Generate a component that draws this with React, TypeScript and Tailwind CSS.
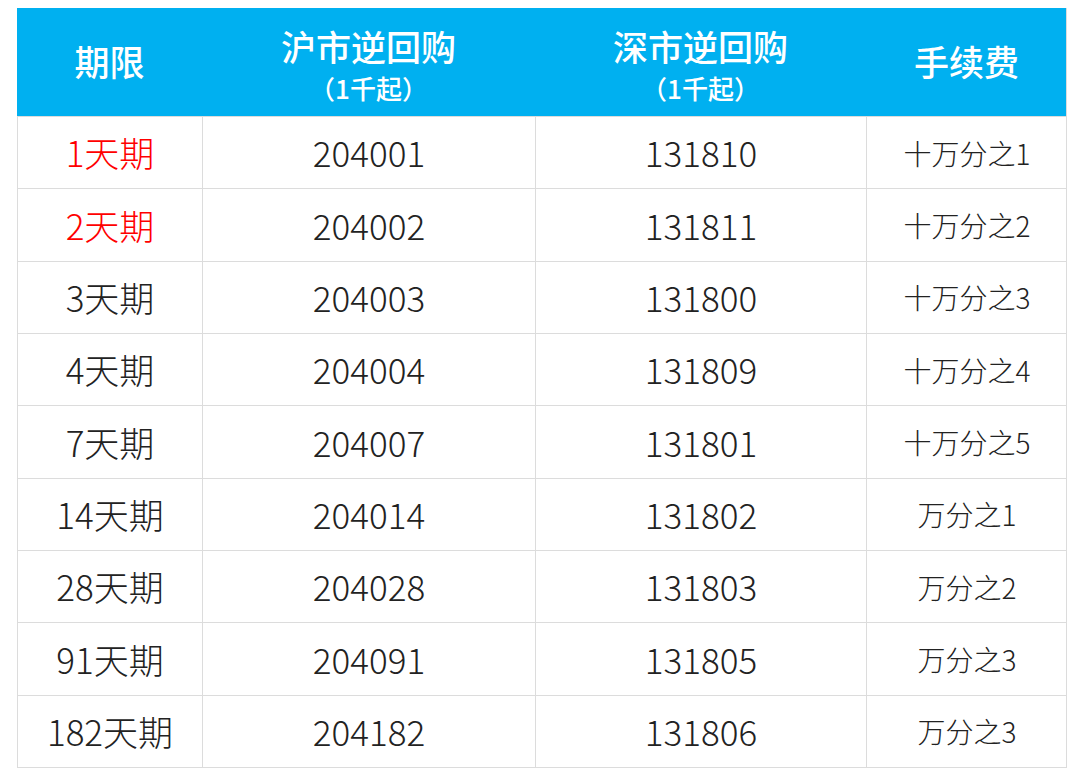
import React from "react";

const FONT = { fontFamily: '"Noto Sans CJK SC", "Noto Sans", sans-serif' };

const ROWS: { term: string; sh: string; sz: string; fee: string; red?: boolean }[] = [
  { term: "1天期", sh: "204001", sz: "131810", fee: "十万分之1", red: true },
  { term: "2天期", sh: "204002", sz: "131811", fee: "十万分之2", red: true },
  { term: "3天期", sh: "204003", sz: "131800", fee: "十万分之3" },
  { term: "4天期", sh: "204004", sz: "131809", fee: "十万分之4" },
  { term: "7天期", sh: "204007", sz: "131801", fee: "十万分之5" },
  { term: "14天期", sh: "204014", sz: "131802", fee: "万分之1" },
  { term: "28天期", sh: "204028", sz: "131803", fee: "万分之2" },
  { term: "91天期", sh: "204091", sz: "131805", fee: "万分之3" },
  { term: "182天期", sh: "204182", sz: "131806", fee: "万分之3" }
];

const COLS = "grid grid-cols-[185px_333px_331px_201px]";

export default function App() {
  return (
    <div className="h-[778px] w-[1080px] bg-white pl-[17px] pt-[8px]" style={FONT}>
      <div className="flex h-[760px] w-[1050px] flex-col border-b border-r border-[#dcdcdc]">
        {/* 表头 */}
        <div className={`${COLS} h-[108px] bg-[#00b0f0] text-white`}>
          <div className="flex items-center justify-center pb-[2px] text-[35px] font-medium">期限</div>
          <div className="flex flex-col items-center pt-[14px]">
            <span className="text-[35px] font-medium leading-[48px]">沪市逆回购</span>
            <span className="text-[26px] font-medium leading-[36px]">（1千起）</span>
          </div>
          <div className="flex flex-col items-center pt-[14px]">
            <span className="text-[35px] font-medium leading-[48px]">深市逆回购</span>
            <span className="text-[26px] font-medium leading-[36px]">（1千起）</span>
          </div>
          <div className="flex items-center justify-center pb-[2px] text-[35px] font-medium">手续费</div>
        </div>

        {/* 数据行 */}
        <div className="grid flex-1 grid-rows-[repeat(9,1fr)] font-light">
          {ROWS.map((r) => (
            <div key={r.term} className={`${COLS} border-t border-[#dcdcdc] text-[#222]`}>
              <div
                className={`flex items-center justify-center border-l border-[#dcdcdc] text-[35px] ${r.red ? "text-[#ff0000]" : ""}`}
              >
                {r.term}
              </div>
              <div className="flex items-center justify-center border-l border-[#dcdcdc] text-[35px]">{r.sh}</div>
              <div className="flex items-center justify-center border-l border-[#dcdcdc] text-[35px]">{r.sz}</div>
              <div className="flex items-center justify-center border-l border-[#dcdcdc] text-[28px]">{r.fee}</div>
            </div>
          ))}
        </div>
      </div>
    </div>
  );
}
